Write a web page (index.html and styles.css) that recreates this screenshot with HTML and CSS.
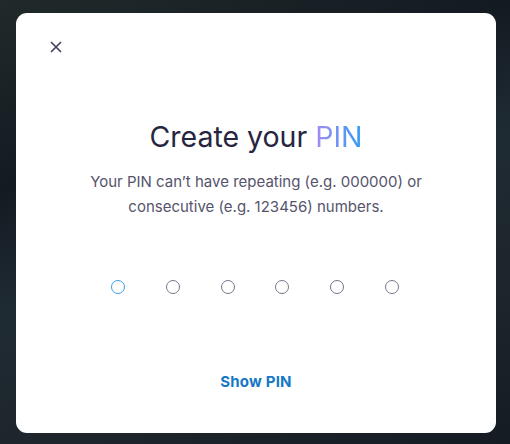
FILE: index.html
```html
<!DOCTYPE html>
<html lang="en">
<head>
<meta charset="utf-8">
<title>Create your PIN</title>
<link rel="stylesheet" href="styles.css">
</head>
<body>
  <div class="backdrop">
    <div class="modal">
      <button class="close" aria-label="Close">
        <svg width="12" height="12" viewBox="0 0 12 12"><path d="M1.5 1.5 L10.5 10.5 M10.5 1.5 L1.5 10.5" stroke="#45445f" stroke-width="1.7" stroke-linecap="round"/></svg>
      </button>
      <h1 class="title">Create your <span class="accent">PIN</span></h1>
      <p class="hint">Your PIN can’t have repeating (e.g. 000000) or<br>consecutive (e.g. 123456) numbers.</p>
      <div class="dots">
        <span class="dot active"></span>
        <span class="dot"></span>
        <span class="dot"></span>
        <span class="dot"></span>
        <span class="dot"></span>
        <span class="dot"></span>
      </div>
      <button class="show">Show PIN</button>
    </div>
  </div>
</body>
</html>
```
FILE: styles.css
```css
* { box-sizing: border-box; }
html, body { margin: 0; height: 100%; }
body {
  font-family: "Inter", "Noto Sans", sans-serif;
}
.backdrop {
  width: 510px;
  height: 444px;
  padding: 13px 14px 11px 16px;
  background: linear-gradient(160deg, #202a2a 0%, #141a22 30%, #1f2b33 50%, #1e252b 75%, #151b22 100%);
}
.modal {
  width: 480px;
  height: 420px;
  background: #fff;
  border-radius: 11px;
  display: flex;
  flex-direction: column;
  align-items: center;
  position: relative;
  padding-top: 107px;
}
.close {
  position: absolute;
  left: 34px;
  top: 28px;
  width: 12px;
  height: 12px;
  padding: 0;
  border: 0;
  background: none;
  display: flex;
}
.title {
  margin: 0;
  font-size: 28.5px;
  font-weight: 400;
  line-height: 34px;
  color: #262640;
  letter-spacing: 0;
}
.accent {
  background: linear-gradient(90deg, #a58cf5 0%, #2f9cf4 100%);
  -webkit-background-clip: text;
  background-clip: text;
  color: transparent;
}
.hint {
  margin: 15px 0 0;
  text-align: center;
  font-size: 15px;
  line-height: 25px;
  color: #55546c;
}
.dots {
  display: flex;
  gap: 40.8px;
  margin-top: 61px;
  margin-right: 2px;
}
.dot {
  width: 14px;
  height: 14px;
  border-radius: 50%;
  border: 1.3px solid #77768c;
}
.dot.active { border-color: #3a9de6; }
.show {
  margin-top: 78px;
  border: 0;
  background: none;
  padding: 0;
  font-family: inherit;
  font-size: 15px;
  font-weight: 700;
  letter-spacing: 0.2px;
  color: #1677c6;
}
```
